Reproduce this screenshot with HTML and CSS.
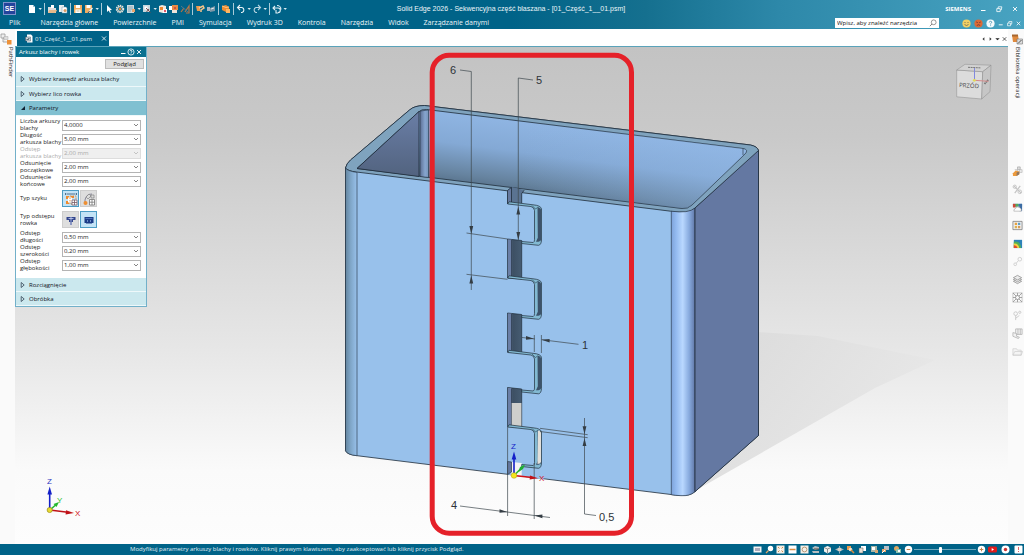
FILE: index.html
```
<!DOCTYPE html>
<html lang="pl">
<head>
<meta charset="utf-8">
<title>Solid Edge 2026 - Sekwencyjna część blaszana</title>
<link rel="stylesheet" href="styles.css">
</head>
<body>
<svg class="defs" aria-hidden="true">
  <symbol id="caret" viewBox="0 0 4 10"><path d="M.5 4h3.4L2.2 6z" fill="#d8ebf1"/></symbol>
  <symbol id="chev" viewBox="0 0 8 8"><path d="M2 3l2 2 2-2" fill="none" stroke="#666" stroke-width=".8"/></symbol>
  <symbol id="tri" viewBox="0 0 6 8"><path d="M1.2 1.500v5L4.200 4z" fill="none" stroke="#345" stroke-width=".8"/></symbol>
  <symbol id="tri-open" viewBox="0 0 6 8"><path d="M5 2v4H1z" fill="#123"/></symbol>
  <symbol id="close" viewBox="0 0 8 8"><path d="M2 2l4 4M6 2L2 6" fill="none" stroke="currentColor" stroke-width=".9"/></symbol>
  <symbol id="min" viewBox="0 0 8 8"><path d="M2 5.500h4.500" fill="none" stroke="currentColor"/></symbol>
  <symbol id="restore" viewBox="0 0 8 8"><path d="M1.800 3.600h3.400v3H1.800zM3 3.400l.3-1.600h3.500l-.4 3H5.300" fill="none" stroke="currentColor" stroke-width=".8"/></symbol>
  <symbol id="new" viewBox="0 0 10 10"><path d="M2 1h4l2 2v6H2z" fill="#fff"/><path d="M6 1v2h2" fill="#9cc3d3"/></symbol>
  <symbol id="open" viewBox="0 0 10 10"><path d="M1 3h3l1 1h4v5H1z" fill="#ddd"/><path d="M4 1h3v3H4z" fill="#fff"/><path d="M2 6h8L8.500 9H1z" fill="#e6b98a"/></symbol>
  <symbol id="copyfile" viewBox="0 0 10 10"><path d="M1 1h5v7H1z" fill="#e9eef0"/><path d="M4 3h4l1 1v5H4z" fill="#fff" stroke="#7797a5" stroke-width=".5"/><circle cx="7" cy="6.500" r="1.500" fill="#d99b64"/></symbol>
  <symbol id="save" viewBox="0 0 10 10"><path d="M1 1h8v8H1z" fill="#efae62"/><path d="M3 1h4v3H3zM2.500 5.500h5V9h-5z" fill="#fff"/><path d="M3.500 7h3" stroke="#996" stroke-width=".6"/></symbol>
  <symbol id="saveas" viewBox="0 0 10 10"><path d="M1 1h7v8H1z" fill="#efae62"/><path d="M2.500 1h4v3h-4z" fill="#fff"/><path d="M4.500 8.500L8.500 4" stroke="#eee" stroke-width="1.400"/><path d="M4 9l1.500-2" stroke="#345"/></symbol>
  <symbol id="cursor" viewBox="0 0 10 10"><path d="M3 1v7l1.700-1.400L6 9l1-.5-1.200-2.300L8 6z" fill="#fff"/></symbol>
  <symbol id="gear" viewBox="0 0 10 10"><circle cx="5" cy="5" r="3.400" fill="none" stroke="#e9e2d8" stroke-width="1.600" stroke-dasharray="1.500 .7"/><circle cx="5" cy="5" r="2.400" fill="none" stroke="#e9e2d8"/><circle cx="5" cy="5" r="1.200" fill="#e98732"/></symbol>
  <symbol id="win" viewBox="0 0 10 10"><path d="M1 1h7v8H1z" fill="#cbdae0"/><path d="M2 3h5M2 5h5M2 7h3" stroke="#7c9ba8" stroke-width=".8"/><path d="M6 5h3v3H6z" fill="#e9a46a"/></symbol>
  <symbol id="select" viewBox="0 0 10 10"><path d="M1 1h7v7H1z" fill="#c8d8de"/><path d="M2.500 2.500h3v3h-3z" fill="#fff"/><path d="M4 4l4.500 4.500M7 5L4.500 8" stroke="#744" stroke-width=".9"/></symbol>
  <symbol id="part" viewBox="0 0 10 10"><path d="M1 2l3-1 4 1v5L5 9 1 8z" fill="#f2e8dc"/><path d="M2 3h3v3H2z" fill="#e98732"/><path d="M5 5h4v4H5z" fill="#fff"/><circle cx="7" cy="7" r="1.200" fill="#d56"/></symbol>
  <symbol id="boxes" viewBox="0 0 10 10"><path d="M0 2h5v4H0z" fill="#fff"/><path d="M3 1h6v5H3z" fill="#e98b45"/><path d="M3 6h5v3H3z" fill="#efe4da"/><path d="M5 3h2v2H5z" fill="#d5513a"/></symbol>
  <symbol id="measure" viewBox="0 0 10 10"><path d="M1 8l3-4M5 8l4-6v7H6" stroke="#bb7442" stroke-width="1.200" fill="none"/><path d="M1 2l7 6" stroke="#53798a"/></symbol>
  <symbol id="hook" viewBox="0 0 10 10"><path d="M1 2h4v5H2z" fill="#ed9a4e"/><path d="M4 4l4-2 1 2-3 2v2" stroke="#f7c589" stroke-width="1.500" fill="none"/></symbol>
  <symbol id="sheet" viewBox="0 0 10 10"><path d="M1 3h3v4H1z" fill="#aab7c2"/><path d="M4 4l5-2v5L4 8z" fill="#7e98a8"/><path d="M5 5l3-1" stroke="#dfe8ec"/></symbol>
  <symbol id="ball" viewBox="0 0 10 10"><path d="M1 2l4-1 3 2v4L5 8 1 6z" fill="#ed8d33"/><path d="M1 2l4 1.500L8 3" stroke="#ffc37d" fill="none"/><path d="M5 5h4v4H5z" fill="#ffb661"/></symbol>
  <symbol id="undo" viewBox="0 0 10 10"><path d="M4 1L1.500 3.500 4 6M1.500 3.500H6a2.600 2.600 0 0 1 0 5H5" fill="none" stroke="#e8f3f6" stroke-width="1.100"/></symbol>
  <symbol id="redo" viewBox="0 0 10 10"><path d="M6 1l2.500 2.500L6 6M8.500 3.500H4a2.600 2.600 0 0 0 0 5h1" fill="none" stroke="#b8d6e1" stroke-width="1.100"/></symbol>
  <symbol id="repeat" viewBox="0 0 10 10"><path d="M3 2L1 4l2 2M1 4h5a2.300 2.300 0 0 1 0 4.600M5 1.500a4 4 0 0 1 4 4M4 6v3h2" fill="none" stroke="#e0eff4" stroke-width="1.100"/></symbol>
  <symbol id="lib" viewBox="0 0 12 12"><path d="M1 2h6l1 7H2z" fill="#e08a3e"/><path d="M1 1.500h6v2H1z" fill="#a8672e"/><path d="M6 6h5.500v5H6z" fill="#ddd" stroke="#777" stroke-width=".6"/><path d="M7 10.500l3.500-3.500" stroke="#555"/></symbol>
  <symbol id="tree" viewBox="0 0 12 12"><path d="M1 1h4v4H1zM3 5v4h4M3 5h5" fill="#eee" stroke="#999" stroke-width=".8"/><path d="M7 7h4.500v4.500H7z" fill="#ed9138"/><path d="M4 3.500h4v3H4z" fill="#ddd" stroke="#aaa" stroke-width=".5"/></symbol>
</svg>

<div class="app">
  <header class="top">
    <div class="titlebar">
      <div class="tools">
        <span class="logo">SE</span>
        <button class="tb" aria-label="Nowy"><svg><use href="#new"/></svg></button><svg class="car"><use href="#caret"/></svg><i class="sep"></i>
        <button class="tb" aria-label="Otwórz"><svg><use href="#open"/></svg></button>
        <button class="tb" aria-label="Kopiuj"><svg><use href="#copyfile"/></svg></button><i class="sep"></i>
        <button class="tb" aria-label="Zapisz"><svg><use href="#save"/></svg></button>
        <button class="tb" aria-label="Zapisz jako"><svg><use href="#saveas"/></svg></button><svg class="car"><use href="#caret"/></svg><i class="sep"></i>
        <button class="tb" aria-label="Wybierz"><svg><use href="#cursor"/></svg></button>
        <button class="tb" aria-label="Opcje"><svg><use href="#gear"/></svg></button>
        <button class="tb" aria-label="Okno"><svg><use href="#win"/></svg></button><svg class="car"><use href="#caret"/></svg>
        <button class="tb" aria-label="Zaznacz"><svg><use href="#select"/></svg></button><svg class="car"><use href="#caret"/></svg>
        <button class="tb" aria-label="Część"><svg><use href="#part"/></svg></button>
        <button class="tb" aria-label="Zespół"><svg><use href="#boxes"/></svg></button>
        <button class="tb" aria-label="Pomiar"><svg><use href="#measure"/></svg></button><i class="sep"></i>
        <button class="tb" aria-label="Zagięcie"><svg><use href="#hook"/></svg></button>
        <button class="tb" aria-label="Arkusz"><svg><use href="#sheet"/></svg></button><i class="sep"></i>
        <button class="tb" aria-label="Bryła"><svg><use href="#ball"/></svg></button><i class="sep"></i>
        <button class="tb" aria-label="Cofnij"><svg><use href="#undo"/></svg></button><svg class="car"><use href="#caret"/></svg>
        <button class="tb" aria-label="Ponów"><svg><use href="#redo"/></svg></button><svg class="car"><use href="#caret"/></svg><i class="sep"></i>
        <button class="tb" aria-label="Powtórz"><svg><use href="#repeat"/></svg></button><svg class="car"><use href="#caret"/></svg>
      </div>
      <h1 class="title">Solid Edge 2026 - Sekwencyjna część blaszana - [01_Część_1__01.psm]</h1>
      <div class="winctl">
        <b class="brand">SIEMENS</b>
        <button aria-label="Minimalizuj"><svg><use href="#min"/></svg></button>
        <button aria-label="Przywróć"><svg><use href="#restore"/></svg></button>
        <button aria-label="Zamknij"><svg><use href="#close"/></svg></button>
      </div>
    </div>
    <div class="menubar">
      <nav class="menu">
        <a class="file" href="#">Plik</a><a href="#">Narzędzia główne</a><a href="#">Powierzchnie</a><a href="#">PMI</a><a href="#">Symulacja</a><a href="#">Wydruk 3D</a><a href="#">Kontrola</a><a href="#">Narzędzia</a><a href="#">Widok</a><a href="#">Zarządzanie danymi</a>
      </nav>
      <label class="search"><input type="text" aria-label="Szukaj" value="Wpisz, aby znaleźć narzędzia"><svg viewBox="0 0 8 8"><circle cx="4.700" cy="3.300" r="2.400" fill="none" stroke="#555" stroke-width=".6"/><path d="M3 5L.8 7.200" stroke="#555" stroke-width=".7"/></svg></label>
      <div class="help">
        <button aria-label="Lubię"><svg viewBox="0 0 9 9"><circle cx="4.500" cy="4.500" r="4.100" fill="#f2cf63"/><path d="M3 3v1M6 3v1M2.500 5.500q2 2 4 0" stroke="#665" stroke-width=".8" fill="none"/></svg></button>
        <button aria-label="Nie lubię"><svg viewBox="0 0 9 9"><circle cx="4.500" cy="4.500" r="4.100" fill="#dd6a35"/><path d="M2.300 3l1.500.7M6.700 3l-1.500.7M2.800 6.500q1.700-1.500 3.400 0" stroke="#633" stroke-width=".8" fill="none"/></svg></button>
        <button aria-label="Pomoc"><svg viewBox="0 0 9 9"><circle cx="4.500" cy="4.500" r="4.100" fill="#f5fafc"/><path d="M3.300 3.500q.1-1.300 1.300-1.200 1.200.1 1.100 1.100-.1.700-1.100 1.300V5.500M4.600 6.300v.8" stroke="#3b8dac" stroke-width=".8" fill="none"/></svg></button>
        <button aria-label="Minimalizuj dokument"><svg><use href="#min"/></svg></button>
        <button aria-label="Przywróć dokument"><svg><use href="#restore"/></svg></button>
        <button aria-label="Zamknij dokument"><svg><use href="#close"/></svg></button>
      </div>
    </div>
  </header>

  <div class="body">
    <aside class="rail left">
      <svg class="railtop"><use href="#tree"/></svg>
      <span class="vert">PathFinder</span>
    </aside>
    <main class="center">
      <div class="tabs">
        <div class="tab">
          <svg viewBox="0 0 8 9"><path d="M2 .5h4l1.500 1.500v6.500H2z" fill="#fff"/><path d="M.5 3h5v4h-5z" fill="#cdd6da" stroke="#456" stroke-width=".5"/><path d="M1.500 5.500h2V4.500h1" stroke="#234" stroke-width=".7" fill="none"/></svg>
          <span>01_Część_1__01.psm</span>
          <button aria-label="Zamknij kartę"><svg><use href="#close"/></svg></button>
        </div>
        <div class="tabctl">
          <button aria-label="Poprzednia"><svg viewBox="0 0 8 8"><path d="M5 2v4L2.800 4z" fill="#333"/></svg></button>
          <button aria-label="Następna"><svg viewBox="0 0 8 8"><path d="M3 2v4L5.200 4z" fill="#333"/></svg></button>
          <button aria-label="Lista"><svg viewBox="0 0 8 8"><path d="M1.500 3h5L4 5.500z" fill="#222"/></svg></button>
          <button aria-label="Zamknij"><svg><use href="#close"/></svg></button>
        </div>
      </div>

      <div class="viewport">
        <svg class="scene" viewBox="15 47 993 497" preserveAspectRatio="xMidYMid slice">
          <defs>
            <linearGradient id="gBack" x1="560" y1="118" x2="549" y2="203" gradientUnits="userSpaceOnUse"><stop offset="0" stop-color="#92b8e6"/><stop offset=".45" stop-color="#84a9d5"/><stop offset=".8" stop-color="#66839f"/><stop offset="1" stop-color="#4e667d"/></linearGradient>
            <linearGradient id="gBackR" x1="520" x2="745" y1="0" y2="0" gradientUnits="userSpaceOnUse"><stop offset="0" stop-color="#92b8e6" stop-opacity="0"/><stop offset="1" stop-color="#92b8e6" stop-opacity=".4"/></linearGradient>
            <linearGradient id="gIn" x1="0" x2="0" y1="0" y2="1"><stop offset="0" stop-color="#6a7ea6"/><stop offset="1" stop-color="#52637f"/></linearGradient>
            <linearGradient id="gInC" x1="0" x2="1" y1="0" y2="0"><stop offset="0" stop-color="#5c6f94"/><stop offset=".6" stop-color="#86a5cf"/><stop offset="1" stop-color="#7795bb"/></linearGradient>
            <linearGradient id="gL" x1="0" x2="1" y1="0" y2="0"><stop offset="0" stop-color="#64859f"/><stop offset=".45" stop-color="#7fa6c8"/><stop offset="1" stop-color="#98c1eb"/></linearGradient>
            <linearGradient id="gR" x1="0" x2="1" y1="0" y2="0"><stop offset="0" stop-color="#7ea3da"/><stop offset=".2" stop-color="#93baf0"/><stop offset=".48" stop-color="#b9d8ff"/><stop offset=".75" stop-color="#88abdf"/><stop offset="1" stop-color="#6077a6"/></linearGradient>
            <linearGradient id="gShadow" x1="0" x2="1" y1="0" y2="0"><stop offset="0" stop-color="#d6d6d6"/><stop offset="1" stop-color="#e6e6e6"/></linearGradient>
            <linearGradient id="gSlot" x1="0" x2="1" y1="0" y2="0"><stop offset="0" stop-color="#596f87"/><stop offset=".4" stop-color="#3d5064"/><stop offset="1" stop-color="#465c72"/></linearGradient>
            <g id="tooth">
              <path d="M507.700 204L509 201.800l24 3Q541 205.500 541.500 209v31q-.3 5-3 5.300l-16.800-1.800v-2l11.500 1q1.500-.8 1.300-3v-29q-.2-3-3.500-4z" fill="#82b9d2" stroke="#1e2c3a" stroke-width=".7"/>
              <path d="M537.500 207q3.500.8 3.500 3v30q-.5 2-5 1.800l1.800-4z" fill="#3c526a"/>
              <path d="M532 205.500l3.500 3.500 2-1.500" fill="none" stroke="#29404f" stroke-width=".6"/>
            </g>
            <g id="slot">
              <path d="M507.500 239l14.200 1.500V279l-14.200-1z" fill="url(#gSlot)" stroke="#1e2c3a" stroke-width=".7"/>
              <path d="M507.900 239.500h3.600V276l-3.600 1.500z" fill="#6b7fa6"/>
              <path d="M511.500 240v36" stroke="#243140" stroke-width=".6"/>
            </g>
          </defs>

          <path d="M758 332l60 4 117 24-60 28-182 104z" fill="url(#gShadow)" opacity=".75"/>

          <g stroke="#1e2c3a" stroke-width=".8" stroke-linejoin="round">
            <path d="M345.500 168q1-4.500 5-8l59-50q5-4.500 15-4.500l326 39.500q7 1.500 8 5.500v285l-64 56.500q-5 4-14 3.500-6-.3-9.500-1L357 455.700q-10-1-11.500-5z" fill="#98c1eb"/>
            <path d="M345.500 168q1-4.500 5-8l59-50q5-4.500 15-4.500l326 39.500q7 1.500 8 5.500-1 2-3 4l-61 54q-5 4.500-14 3.700-6-.2-10-1L356.500 172q-9-1-11-4z" fill="#7fa3be"/>
            <path d="M357 168.500l61.500-56.500q3-3 8-2.500L743 148.500q6 1 2 5.500l-53 51q-4 4-10 3.500z" fill="url(#gBack)"/>
            <path d="M520 120.500L743 148.500q6 1 2 5.500l-53 51q-4 4-10 3.500l-162-20z" fill="url(#gBackR)" stroke="none"/>
            <path d="M357 168.500l62-57v65z" fill="url(#gIn)"/>
            <path d="M420 111l8.500-1v67.500l-8.500-1z" fill="url(#gInC)" stroke-width=".6"/>
            <path d="M743 148.500v6.500" stroke-width=".6"/>
            <path d="M345.500 168q2 3 11.500 4.500v283.200q-10-1-11.500-5z" fill="url(#gL)" stroke-width=".6"/>
            <path d="M671.300 211.200q17 2.500 23.700-3.200v283.700q-5 4.500-14 4-6-.3-9.700-1z" fill="url(#gR)" stroke-width=".6"/>
            <path d="M695 208l63.500-57.500v285L695 491.700z" fill="#6478a2"/>
          </g>

          <path d="M507.500 190.500L511.500 187l12.500 3-2.300 4V204h-14.200z" fill="#5a7391"/>
          <path d="M507.500 190.700l4-3.200V202l-4 2z" fill="#65799f"/>
          <path d="M507.500 204v-13.500l4-3.200V202M521.700 203v-9.500l2.500-3.300" fill="none" stroke="#1e2c3a" stroke-width=".8"/>
          <use href="#slot"/><use href="#slot" y="74"/><use href="#slot" y="148.500"/>
          <path d="M511.700 403h9.700v24.500l-9.700-1z" fill="#cfcfcc"/>
          <path d="M507.500 461.500l14 1.500 22 1v15.500l-30-4-6-1z" fill="#98c1eb"/>
          <path d="M511.500 462l10.200 1v13.500l-10.200-1.500z" fill="#f5f5f5"/>
          <path d="M507.500 461.500l4 .5V472l-4 2.500z" fill="#6478a0" stroke="#1e2c3a" stroke-width=".6"/>
          <use href="#tooth"/><use href="#tooth" y="74"/><use href="#tooth" y="148.500"/><use href="#tooth" y="223"/>
          <path d="M538 430.500q3 .5 3 2.500v29q-.5 2-3.500 2z" fill="#e2dfda"/>

          <g fill="none" stroke="#3e474e" stroke-width=".7">
            <path d="M460 70l11.300 1.500V290M466.500 233l41 6M466.500 274.300l41 5M533 80l-14.700-2V240"/>
            <path d="M522 337.500l13 1.500M541.500 339.700l37 4.600M534.300 335v17M541.400 335v18"/>
            <path d="M584.500 418v96l11.500 1.500M540 428.300l47.700 6.400M540 431.500l47.700 6.200"/>
            <path d="M460 506l90 11.500M507.600 427v89M534.200 463v56"/>
          </g>
          <g fill="#343d44">
            <path d="M471.300 234l-1.900-8h3.800zM471.300 275.500l-1.900 8h3.800zM518.300 206.500l-1.900 8h3.800zM518.300 240l-1.900-8h3.800z"/>
            <path d="M534 338.800l-8-2.700v3.600zM541.600 339.800l8-.9v3.700zM584.500 434.200l-1.900-8h3.800zM584.500 438l-1.900 8h3.800zM507.500 512l-8-2.800v3.600zM534.400 515.500l8-.9v3.700z"/>
          </g>
          <g class="dim"><text x="450" y="74">6</text><text x="536" y="84">5</text><text x="582" y="349">1</text><text x="451" y="509">4</text><text x="599" y="521">0,5</text></g>

          <g stroke-width="1.600" fill="none"><path d="M514 475.500V458" stroke="#1420c8"/><path d="M514 475.500l18 2" stroke="#d01218"/><path d="M514 475.500l9-9" stroke="#26b82c"/></g>
          <path d="M514 451.500l-2.300 8h4.600z" fill="#1420c8"/><path d="M538 478.200l-8-2.800-.4 4.200z" fill="#c01218"/><path d="M520 467l5-2.500-2 4.500-4.500 3z" fill="#1fae34"/>
          <circle cx="514" cy="475.500" r="2.800" fill="#f4e61c" stroke="#a89b10" stroke-width=".5"/>
          <g class="axis"><text x="511" y="449" fill="#1420c8">Z</text><text x="539" y="481" fill="#d01218">X</text></g>

          <g stroke-width="1.600" fill="none"><path d="M49.700 510V493" stroke="#1420c8"/><path d="M49.700 510l18 2.200" stroke="#c01218"/><path d="M49.700 510l6-5" stroke="#26b82c"/></g>
          <path d="M49.700 486.500l-2.300 8h4.600z" fill="#1420c8"/><path d="M74 513l-8-2.800-.4 4.200z" fill="#c01218"/><path d="M59 502l-5.500 2 3 3z" fill="#26b82c"/>
          <circle cx="49.700" cy="510" r="2.600" fill="#e8da30" stroke="#8c8010" stroke-width=".6"/>
          <g class="axis"><text x="47" y="484" fill="#2a34c0">Z</text><text x="75" y="516" fill="#d01218">X</text><text x="57" y="503" fill="#26c02c">Y</text></g>

          <g stroke="#8b8b8b" stroke-width=".5" stroke-linejoin="round">
            <path d="M956.700 70l26 1.700L981.700 99l-25-2.200z" fill="#dcdcdc"/><path d="M956.700 70l8.300-5.700 26 .9-8.300 6.500z" fill="#d2d2d2"/><path d="M982.700 71.700L991 65.200l-1 26.500-8.300 7.300z" fill="#c6c6c6"/>
          </g>
          <path d="M968 67.300l13 .6" stroke="#777" stroke-dasharray="2 .6"/><path d="M984.500 84l4-4.500" stroke="#777" stroke-width="1.800" stroke-dasharray="1.500 .5"/>
          <path d="M974.500 68v12" stroke="#8189dd"/><path d="M974.500 80.300l14 1" stroke="#d58a8a"/><circle cx="974.300" cy="80.300" r="1.400" fill="#e3dc55"/>
          <text class="cube" x="959" y="87" transform="rotate(4 959 87)">PRZÓD</text>

          <rect x="432.200" y="55.300" width="199.300" height="478" rx="17" fill="none" stroke="#e52129" stroke-width="5"/>
        </svg>

        <section class="panel">
          <div class="phead"><h2>Arkusz blachy i rowek</h2>
            <button aria-label="Zwiń"><svg><use href="#min"/></svg></button>
            <button aria-label="Pomoc panelu"><svg viewBox="0 0 8 8"><circle cx="4" cy="4" r="3.100" fill="none" stroke="#fff" stroke-width=".8"/><path d="M3 3.300q.1-1 1-1t1 .9-1 1.300v.3M4 5.500v.6" stroke="#fff" stroke-width=".8" fill="none"/></svg></button>
            <button aria-label="Zamknij panel"><svg><use href="#close"/></svg></button>
          </div>
          <div class="pact"><button class="preview">Podgląd</button></div>
          <button class="acc first"><svg><use href="#tri"/></svg>Wybierz krawędź arkusza blachy</button>
          <button class="acc"><svg><use href="#tri"/></svg>Wybierz lico rowka</button>
          <button class="acc on"><svg><use href="#tri-open"/></svg>Parametry</button>
          <form class="form">
            <div class="row"><label for="f1">Liczba arkuszy<br>blachy</label><span class="sel"><select id="f1"><option>4,0000</option></select><svg><use href="#chev"/></svg></span></div>
            <div class="row"><label for="f2">Długość<br>arkusza blachy</label><span class="sel"><select id="f2"><option>5,00 mm</option></select><svg><use href="#chev"/></svg></span></div>
            <div class="row off"><label for="f3">Odstęp<br>arkusza blachy</label><span class="sel"><select id="f3" disabled><option>2,00 mm</option></select><svg><use href="#chev"/></svg></span></div>
            <div class="row"><label for="f4">Odsunięcie<br>początkowe</label><span class="sel"><select id="f4"><option>2,00 mm</option></select><svg><use href="#chev"/></svg></span></div>
            <div class="row"><label for="f5">Odsunięcie<br>końcowe</label><span class="sel"><select id="f5"><option>2,00 mm</option></select><svg><use href="#chev"/></svg></span></div>
            <div class="row tall"><span>Typ szyku</span><span class="pair">
              <button type="button" class="pick on" aria-label="Szyk prostokątny"><svg viewBox="0 0 14 14"><path d="M2.500 2h9M1.500 1v2M12.500 1v2" stroke="#357" stroke-width=".8"/><path d="M2 4h3v3H2zM2 9h3v3H2zM7 4h3v2H7z" fill="#ef8a2e"/><path d="M4 5.500h4v5H4z" fill="#fff"/><path d="M6 4h6v8H6z" fill="none" stroke="#d9822f" stroke-width=".8" stroke-dasharray="1.500 1"/><path d="M8 8h5v5H8zM10.500 8v5M8 10.500h5" fill="#fff" stroke="#7a5a66" stroke-width=".8"/></svg></button>
              <button type="button" class="pick" aria-label="Szyk wzdłuż krzywej"><svg viewBox="0 0 14 14"><path d="M3 11V8q1-6 7-6" fill="none" stroke="#889" stroke-width="1"/><path d="M4 5l3-3 2 2-3 3zM9 3h3v3H9z" fill="#dcdcdc" stroke="#777" stroke-width=".6"/><circle cx="3.500" cy="11" r="2" fill="#ee8f32"/><path d="M7.500 7.500h5v5.500h-5zM10 7.500V13M7.500 10.200h5" fill="#fff" stroke="#777" stroke-width=".8"/></svg></button></span></div>
            <div class="row tall"><span>Typ odstępu rowka</span><span class="pair">
              <button type="button" class="pick" aria-label="Odstęp pojedynczy"><svg viewBox="0 0 14 14"><path d="M2.500 4h9v3H9v2H5V7H2.500z" fill="#34478e"/><path d="M4.500 5.500h5M7 4v4" stroke="#c5cff2" stroke-width=".8"/><path d="M7 8v4" stroke="#6f7fb8" stroke-width="1.500"/></svg></button>
              <button type="button" class="pick on" aria-label="Odstęp wielokrotny"><svg viewBox="0 0 14 14"><path d="M2.500 4h9v6h-2v1H8.500v-1h-1v1h-1v-1H5.500v1h-1v-1h-2z" fill="#1c3c88"/><path d="M3.500 5.500h7" stroke="#5f83c9" stroke-width=".8"/><path d="M5.500 7v2M8.500 7v2" stroke="#8fb0e4" stroke-width=".7"/></svg></button></span></div>
            <div class="row"><label for="f6">Odstęp<br>długości</label><span class="sel"><select id="f6"><option>0,50 mm</option></select><svg><use href="#chev"/></svg></span></div>
            <div class="row"><label for="f7">Odstęp<br>szerokości</label><span class="sel"><select id="f7"><option>0,20 mm</option></select><svg><use href="#chev"/></svg></span></div>
            <div class="row"><label for="f8">Odstęp<br>głębokości</label><span class="sel"><select id="f8"><option>1,00 mm</option></select><svg><use href="#chev"/></svg></span></div>
          </form>
          <button class="acc"><svg><use href="#tri"/></svg>Rozciągnięcie</button>
          <button class="acc"><svg><use href="#tri"/></svg>Obróbka</button>
        </section>
      </div>
    </main>
    <aside class="rail right">
      <svg class="railtop"><use href="#lib"/></svg>
      <span class="vert lib">Biblioteka operacji</span>
      <div class="railicons">
        <svg viewBox="0 0 12 12"><path d="M6 1h3v3H6z" fill="#ddd" stroke="#999" stroke-width=".6"/><path d="M8 4h3v3H8zM3 4h3v3" fill="#eee" stroke="#aaa" stroke-width=".6"/><path d="M1 8l3-3 4 1v3l-3 2H1z" fill="#ec9a3c"/><path d="M5 7l3-1v3l-3 2z" fill="#8d7765"/></svg>
        <svg viewBox="0 0 12 12" fill="none" stroke="#c4c4c4"><path d="M2 2l8 8M9 2L3 10" stroke-width="1.300"/><circle cx="3" cy="3" r="1.800"/><circle cx="8.500" cy="8.500" r="2"/></svg>
        <svg viewBox="0 0 12 12"><path d="M1 2h10v3H1z" fill="#458ac6"/><path d="M1 2h3v4H1z" fill="#cf4936"/><path d="M4 2h3v3H4z" fill="#5aad55"/><path d="M8 2h3v8H8z" fill="#3c6ca3"/><path d="M2 10q0-3 2-3 1-3 4-1 3 1 2 4z" fill="#fff" stroke="#999" stroke-width=".6"/></svg>
        <svg viewBox="0 0 12 12"><path d="M1 1.500h10v9H1z" fill="#eee" stroke="#777" stroke-width=".8"/><path d="M3 3h2.500v2.500H3z" fill="#e6a23d"/><path d="M6.500 3H9v2.500H6.500z" fill="#5d9ec5"/><path d="M3 6.500h2.500V9H3z" fill="#dfb14d"/><path d="M6.500 6.500H9V9H6.500z" fill="#d79b56"/></svg>
        <svg viewBox="0 0 12 12"><path d="M2 2h9v9H2z" fill="#2c82b9"/><path d="M2 11V4q7-1 8 7z" fill="#4fae5b"/><path d="M2 11V6q5-.500 6 5z" fill="#f0d23e"/><path d="M2 11V8q3-.500 4 3z" fill="#df4a2d"/></svg>
        <svg viewBox="0 0 12 12" fill="none" stroke="#cfcfcf"><circle cx="8.500" cy="3.500" r="2"/><circle cx="3.500" cy="9" r="1.500"/><path d="M7 5L4.500 8"/></svg>
        <svg viewBox="0 0 12 12" fill="#ececec" stroke="#8a8a8a" stroke-width=".8"><path d="M1.500 8L6 6l4.500 2L6 10.500z"/><path d="M1.500 6L6 4l4.500 2L6 8.500z"/><path d="M1.500 4L6 1.500 10.500 4 6 6.500z"/></svg>
        <svg viewBox="0 0 12 12" fill="none" stroke="#888" stroke-width=".8"><path d="M1 1h10v10H1z" stroke="#bbb"/><circle cx="6" cy="6" r="2.200"/><path d="M1 1l3.500 3.500M11 1L7.500 4.500M1 11l3.500-3.500M11 11L7.500 7.500M6 1v3M6 8v3M1 6h3M8 6h3"/></svg>
        <svg viewBox="0 0 12 12" fill="none" stroke="#c9c9c9"><circle cx="4" cy="4" r="2"/><circle cx="8.500" cy="2.500" r="1.200"/><path d="M4 6v5M4 9l4-3"/></svg>
        <svg viewBox="0 0 12 12" fill="#f2f2f2" stroke="#adadad" stroke-width=".8"><path d="M4 1h7v6H4zM6.500 1v6M9 1v6"/><path d="M1 5l4 1v3l3 1-1 1.500L1 9z"/></svg>
        <svg viewBox="0 0 12 12" fill="#f4f4f4" stroke="#cfcfcf" stroke-width=".8"><path d="M1 10V3h4l1 1.500h4V10zM1 10l2-4h8.500L10 10z"/></svg>
      </div>
    </aside>
  </div>

  <footer class="status">
    <p>Modyfikuj parametry arkuszy blachy i rowków. Kliknij prawym klawiszem, aby zaakceptować lub kliknij przycisk Podgląd.</p>
    <div class="sicons">
      <svg viewBox="0 0 9 9"><path d="M.5 1.500h8v6h-8z" fill="#f3f3f3"/><path d="M2 3h5v3H2z" fill="#aab" /></svg>
      <svg viewBox="0 0 9 9"><circle cx="5.500" cy="3.500" r="2.700" fill="#fff"/><path d="M3.500 5.500L1 8" stroke="#e0a566" stroke-width="1.300"/></svg>
      <svg viewBox="0 0 9 9"><path d="M.5.500h8v8h-8z" fill="#f5eee4"/><path d="M2 2l5 5M7 2L2 7" stroke="#cf8d4e"/><path d="M3.300 3.300h2.400v2.400H3.300z" fill="#fff"/></svg>
      <svg viewBox="0 0 9 9"><path d="M.5.500h8v8h-8z" fill="#fff"/><path d="M1.500 4.500h6" stroke="#d98d45" stroke-width="1.500"/></svg>
      <svg viewBox="0 0 9 9"><path d="M.5.500h8v8h-8z" fill="#f4f0e9"/><circle cx="4.500" cy="4.500" r="2.400" fill="none" stroke="#b89a77"/></svg>
      <svg viewBox="0 0 9 9"><path d="M1 3l3-2 4 1v2L4 5zM1 6h7v2H2z" fill="#b5bdc0"/><path d="M3 4h5" stroke="#574b42"/></svg>
      <svg viewBox="0 0 9 9"><path d="M1 2.500L4.500 1 8 2.500v4L4.500 8.500 1 6.500z" fill="#f1f1ee"/><path d="M1 2.500L4.500 4 8 2.500M4.500 4v4" stroke="#777" stroke-width=".8" fill="none"/></svg>
      <svg viewBox="0 0 9 9"><path d="M0 4.500l4.500-2 4.500 2-4.500 2z" fill="#9db1b9"/><circle cx="4.500" cy="4.500" r="2" fill="#d6cec3"/><path d="M4.500 1v2M4.500 6.500v2" stroke="#9db1b9"/></svg>
      <svg viewBox="0 0 9 9"><path d="M1 1h4v4H1z" fill="#e89a4d"/><circle cx="4.500" cy="4.500" r="1.800" fill="#f4e3cd"/><path d="M5 5l3 3" stroke="#d68b40" stroke-width="1.600"/></svg>
      <svg viewBox="0 0 9 9"><path d="M3 1h5v5H3z" fill="#fff"/><path d="M1 3h4v5H1z" fill="#e9e1d7" stroke="#555" stroke-width=".5"/></svg>
      <svg viewBox="0 0 9 9"><path d="M1 1h6v6H1z" fill="#a8b6a8"/><path d="M2 2h3v3H2z" fill="#fff"/><path d="M5 5h3v3H5z" fill="#d5a774"/></svg>
      <svg viewBox="0 0 9 9"><path d="M3 1h5v4H3z" fill="#b8bec4"/><path d="M1 4h4v3H1z" fill="#e6a56a"/><path d="M1 8l3-3" stroke="#fff"/></svg>
      <svg viewBox="0 0 9 9"><circle cx="3.500" cy="3.500" r="2.500" fill="#dca762"/><path d="M3 4h5v4H3z" fill="#8fc3ae"/><path d="M5 5h2v2H5z" fill="#fff"/></svg>
    </div>
    <div class="zoom">
      <button aria-label="Pomniejsz"><svg viewBox="0 0 9 9"><circle cx="4.500" cy="4.500" r="3.700" fill="#fff"/><path d="M2.700 4.500h3.600" stroke="#c4834a"/></svg></button>
      <input type="range" min="0" max="100" value="42" aria-label="Powiększenie">
      <button aria-label="Powiększ"><svg viewBox="0 0 9 9"><circle cx="4.500" cy="4.500" r="3.700" fill="#fff"/><path d="M2.700 4.500h3.600M4.500 2.700v3.600" stroke="#c4834a"/></svg></button>
    </div>
    <div class="media">
      <button aria-label="YouTube"><svg viewBox="0 0 9 9"><rect y="1.500" width="9" height="6" rx="1.500" fill="#e01b1b"/><path d="M3.700 3v3l2.300-1.500z" fill="#fff"/></svg></button>
      <button aria-label="Nagraj"><svg viewBox="0 0 9 9"><circle cx="4.500" cy="4.500" r="4" fill="#fff"/><circle cx="4.500" cy="4.500" r="1.700" fill="#c33"/></svg></button>
      <button aria-label="Zgłoś"><svg viewBox="0 0 9 9"><rect x=".5" y=".5" width="8" height="8" rx="1" fill="#fff"/><path d="M4.500 2v3M4.500 6v1" stroke="#d66"/></svg></button>
    </div>
  </footer>
</div>
</body>
</html>
```
FILE: styles.css
```
* { box-sizing: border-box; }
body { margin: 0; font: 6px/7px "Open Sans", "Noto Sans", sans-serif; color: #1c1c1c; }
button { border: 0; padding: 0; margin: 0; background: none; font: inherit; color: inherit; display: flex; }
svg { display: block; flex-shrink: 0; }
.defs { position: absolute; width: 0; height: 0; }
.app { height: 100vh; display: flex; flex-direction: column; background: #fff; }

.top { background: linear-gradient(90deg, #006388 50%, #15708f 63%, #2d88a9 76%, #48a3c1); color: #fff; }
.titlebar { display: grid; grid-template-columns: 1fr auto 1fr; align-items: center; height: 17px; padding: 0 5px 0 3px; }
.tools { display: flex; align-items: center; gap: 1px; }
.tools svg { width: 10px; height: 10px; }
.tools .car { width: 4px; }
.sep { width: 1px; height: 12px; margin: 0 1px; background: #a9cbd8; }
.logo { width: 13px; height: 13px; margin-right: 10px; background: #24449c; border: 1px solid #7d93cb; font: bold 7px/11px "Liberation Sans", sans-serif; text-align: center; }
.title { margin: 0; font: 7px/10px "Liberation Sans", sans-serif; color: #eef6f9; white-space: nowrap; }
.winctl { display: flex; justify-content: flex-end; align-items: center; gap: 8px; }
.winctl svg { width: 8px; height: 8px; }
.brand { font: bold 6px/8px "Open Sans", sans-serif; }
.menubar { display: flex; align-items: center; height: 12px; padding: 0 2px 0 9px; }
.menu { display: flex; gap: 15px; flex: 1; font-size: 7px; line-height: 10px; }
.menu a { color: #ecf5f8; text-decoration: none; white-space: nowrap; }
.menu .file { margin-right: 5px; }
.search { display: flex; align-items: center; width: 104px; height: 10px; background: #fff; padding: 0 2px; }
.search input { flex: 1; min-width: 0; border: 0; padding: 0; background: none; font: inherit; line-height: 8px; color: #111; outline: 0; }
.search svg { width: 8px; height: 8px; }
.help { display: flex; align-items: center; gap: 2px; margin-left: 23px; }
.help svg { width: 9px; height: 9px; }
.help button:nth-child(-n+2) { margin-right: 1px; }
.help button:nth-child(n+4) svg { width: 7px; height: 7px; }

.body { flex: 1; min-height: 0; display: flex; }
.rail { display: flex; flex-direction: column; background: #fafafa; padding-top: 4px; }
.left { width: 15px; }
.right { width: 16px; align-items: center; padding-left: 2px; }
.railtop { width: 12px; height: 12px; }
.vert { writing-mode: vertical-rl; font: 6px/9px "Open Sans", sans-serif; color: #222; margin: 2px 0 0 2px; white-space: nowrap; }
.vert.lib { margin-left: 0; height: 54px; }
.railicons { display: flex; flex-direction: column; gap: 7px; margin-top: 65px; }
.railicons svg { width: 11px; height: 11px; }

.center { flex: 1; min-width: 0; display: flex; flex-direction: column; }
.tabs { display: flex; justify-content: space-between; height: 18px; padding: 2px 0 0 2px; border-bottom: 1px solid #5aa3ba; background: #fff; }
.tab { display: flex; align-items: center; width: 92px; background: #006388; color: #e6f2f6; padding: 0 1px 0 8px; font: 6px/10px "Open Sans", sans-serif; }
.tab span { flex: 1; margin-left: 2px; }
.tab svg { width: 8px; height: 9px; }
.tabctl { display: flex; align-items: center; color: #333; }
.tabctl svg { width: 7px; height: 8px; }

.viewport { flex: 1; min-height: 0; position: relative; background: linear-gradient(#c3c3c3, #c9c9c9 18%, #e6e6e6 60%, #fafafa 85%, #fdfdfd); }
.scene { width: 100%; height: 100%; }
.dim text { font: 11px "Liberation Sans", sans-serif; fill: #2d3338; }
.axis text { font: 8px "Liberation Sans", sans-serif; }
.cube { font: 6px "Open Sans", sans-serif; fill: #444; }

.panel { position: absolute; left: 0; top: 0; width: 132px; background: #fff; border: 1px solid #72b0c9; border-top: 0; }
.phead { display: flex; align-items: center; height: 10px; background: #0a7190; color: #fff; padding: 0 3px 0 3px; }
.phead h2 { flex: 1; margin: 0; font: 6px/8px "Open Sans", sans-serif; }
.phead svg { width: 8px; height: 8px; }
.pact { display: flex; justify-content: flex-end; padding: 2px 2px 3px; }
.preview { width: 39px; height: 10px; justify-content: center; background: #e0e0e0; border: 1px solid #bcbcbc; line-height: 8px; }
.acc { width: 100%; height: 14px; align-items: center; gap: 3px; padding-left: 4px; background: #cbe8ee; border-bottom: 1px solid #eef8fa; color: #112; line-height: 8px; }
.acc svg { width: 6px; height: 8px; }
.acc.first { height: 15px; }
.acc.on { background: #80c0d1; height: 15px; }
.form { display: flex; flex-direction: column; padding: 2px 5px 6px 4px; }
.row { display: grid; grid-template-columns: 42px 1fr; align-items: center; min-height: 14px; line-height: 7px; }
.row label { white-space: nowrap; }
.row.tall { min-height: 21px; }
.row.off { color: #aaa; }
.sel { display: grid; align-items: center; }
.sel select { grid-area: 1/1; appearance: none; width: 100%; height: 11px; border: 1px solid #b4b4b4; border-radius: 0; padding: 0 1px; background: #fff; font: inherit; line-height: 8px; color: inherit; }
.off select { background: #efefef; border-color: #ddd; opacity: 1; }
.sel svg { grid-area: 1/1; justify-self: end; width: 8px; height: 8px; margin-right: 1px; pointer-events: none; }
.off .sel svg { opacity: .4; }
.pair { display: flex; gap: 1px; }
.pick { width: 17px; height: 17px; align-items: center; justify-content: center; background: #dedede; border: 1px solid #cdcdcd; }
.pick.on { background: #c3e3f6; border-color: #4c9cc4; }
.pick svg { width: 14px; height: 14px; }

.status { display: flex; align-items: center; height: 11px; background: #006388; color: #e0eff4; padding: 0 1px 0 130px; }
.status p { flex: 1; margin: 0; white-space: nowrap; line-height: 9px; }
.sicons { display: flex; justify-content: space-between; width: 149px; }
.status svg { width: 9px; height: 9px; }
.zoom { display: flex; align-items: center; margin-left: 2px; }
.zoom input { appearance: none; width: 62px; height: 9px; margin: 0 1px; background: linear-gradient(#6fa8bd, #6fa8bd) center / 100% 1px no-repeat; }
.zoom input::-webkit-slider-thumb { appearance: none; width: 3px; height: 6px; background: #fff; border-radius: 1px; }
.media { display: flex; gap: 4px; margin-left: 2px; }
```
